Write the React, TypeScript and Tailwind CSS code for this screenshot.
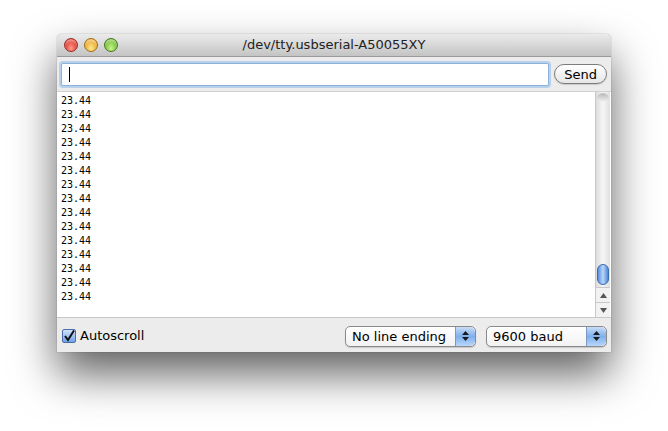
const LINES = Array.from({ length: 15 }, () => '23.44');

function TrafficLight({ from, to, ring }: { from: string; to: string; ring: string }) {
  return (
    <div
      className={`w-[14px] h-[14px] rounded-full border ${ring} ${from} ${to} bg-radial-[at_50%_80%] shadow-[inset_0_2px_2px_rgba(255,255,255,0.45)]`}
    />
  );
}

function Stepper() {
  return (
    <div className="w-[20px] h-full flex flex-col items-center justify-center gap-[2px] rounded-r-[5px] bg-gradient-to-b from-[#c9dcf6] via-[#7fb0ec] to-[#b9d6fa] border-l border-[#7c98c4]">
      <svg width="7" height="4" viewBox="0 0 7 4">
        <path d="M3.5 0 L7 4 L0 4 Z" fill="#1a1a1a" />
      </svg>
      <svg width="7" height="4" viewBox="0 0 7 4">
        <path d="M0 0 L7 0 L3.5 4 Z" fill="#1a1a1a" />
      </svg>
    </div>
  );
}

function Select({ label, width }: { label: string; width: string }) {
  return (
    <div
      className={`${width} h-[21px] flex items-center rounded-[5px] border border-[#8a8a8a] bg-gradient-to-b from-white to-[#f2f2f2] shadow-[0_1px_1px_rgba(0,0,0,0.15)]`}
    >
      <span className="flex-1 pl-[6px] text-[13px] leading-none text-black">{label}</span>
      <Stepper />
    </div>
  );
}

export default function App() {
  return (
    <div
      className="w-[668px] h-[431px] bg-white pt-[34px] pl-[57px]"
      style={{ fontFamily: '"Lucida Grande", "DejaVu Sans", "Liberation Sans", sans-serif' }}
    >
      <div className="w-[554px] h-[318px] flex flex-col rounded-t-[5px] overflow-hidden bg-[#ececec] shadow-[0_22px_44px_rgba(0,0,0,0.62),0_0_1px_rgba(0,0,0,0.6)]">
        {/* Title bar */}
        <div className="relative h-[23px] flex items-center bg-gradient-to-b from-[#ebebeb] to-[#c4c4c4] border-b border-[#9a9a9a]">
          <div className="flex items-center gap-[6px] pl-[7px]">
            <TrafficLight from="from-[#ff9a8c]" to="to-[#d0180f]" ring="border-[#9c2a24]" />
            <TrafficLight from="from-[#ffe98c]" to="to-[#e08e0b]" ring="border-[#a06a16]" />
            <TrafficLight from="from-[#c8f58c]" to="to-[#55a617]" ring="border-[#46771c]" />
          </div>
          <div className="absolute inset-0 flex items-center justify-center text-[13px] text-[#222] pointer-events-none">
            /dev/tty.usbserial-A50055XY
          </div>
        </div>

        {/* Input row */}
        <div className="h-[35px] flex items-center pl-[4px] pr-[4px] gap-[5px] border-b border-[#d0d0d0]">
          <div className="w-[489px] h-[23px] flex items-center rounded-[2px] border border-[#8db2d8] bg-white shadow-[0_0_0_2px_#b7d0ec]">
            <div className="ml-[7px] w-px h-[15px] bg-black" />
          </div>
          <button className="w-[53px] h-[20px] rounded-full border border-[#7c7c7c] bg-gradient-to-b from-white to-[#e6e6e6] text-[13px] leading-none text-black shadow-[0_1px_1px_rgba(0,0,0,0.15)]">
            Send
          </button>
        </div>

        {/* Output */}
        <div className="h-[226px] flex bg-white border-b border-[#c8c8c8]">
          <div
            className="flex-1 pl-[4px] pt-[2px] text-[10px] leading-[14px] text-black"
            style={{ fontFamily: '"DejaVu Sans Mono", "Liberation Mono", monospace' }}
          >
            {LINES.map((l, i) => (
              <div key={i}>{l}</div>
            ))}
          </div>
          <div className="w-[15px] mr-[1px] flex flex-col border-l border-[#c8c8c8] bg-gradient-to-r from-[#dcdcdc] via-[#f6f6f6] to-[#e0e0e0]">
            <div className="h-[8px] rounded-t-full bg-gradient-to-b from-[#b8b8b8] to-[#eaeaea] mx-[1px] mt-[1px]" />
            <div className="flex-1 flex flex-col justify-end pb-[2px]">
              <div className="mx-[1px] h-[21px] rounded-full border border-[#3c6bb0] bg-gradient-to-r from-[#5b8fd9] via-[#b9d6fb] to-[#4f85d4]" />
            </div>
            <div className="h-[15px] flex items-center justify-center border-t border-[#c8c8c8] bg-[#f2f2f2]">
              <svg width="7" height="5" viewBox="0 0 7 5">
                <path d="M3.5 0 L7 5 L0 5 Z" fill="#555" />
              </svg>
            </div>
            <div className="h-[15px] flex items-center justify-center border-t border-[#c8c8c8] bg-[#f2f2f2]">
              <svg width="7" height="5" viewBox="0 0 7 5">
                <path d="M0 0 L7 0 L3.5 5 Z" fill="#555" />
              </svg>
            </div>
          </div>
        </div>

        {/* Bottom bar */}
        <div className="flex-1 flex items-center pl-[5px] pr-[4px] pt-[2px]">
          <div className="w-[14px] h-[14px] flex items-center justify-center rounded-[2px] border border-[#4a6fa8] bg-gradient-to-b from-[#cfe2fb] to-[#6fa3e8]">
            <svg width="12" height="12" viewBox="0 0 12 12">
              <path d="M2 6 L5 10 L11 0.5" fill="none" stroke="#111" strokeWidth="2" />
            </svg>
          </div>
          <span className="ml-[4px] text-[13px] text-black">Autoscroll</span>
          <div className="flex-1" />
          <Select label="No line ending" width="w-[131px]" />
          <div className="w-[10px]" />
          <Select label="9600 baud" width="w-[121px]" />
        </div>
      </div>
    </div>
  );
}
